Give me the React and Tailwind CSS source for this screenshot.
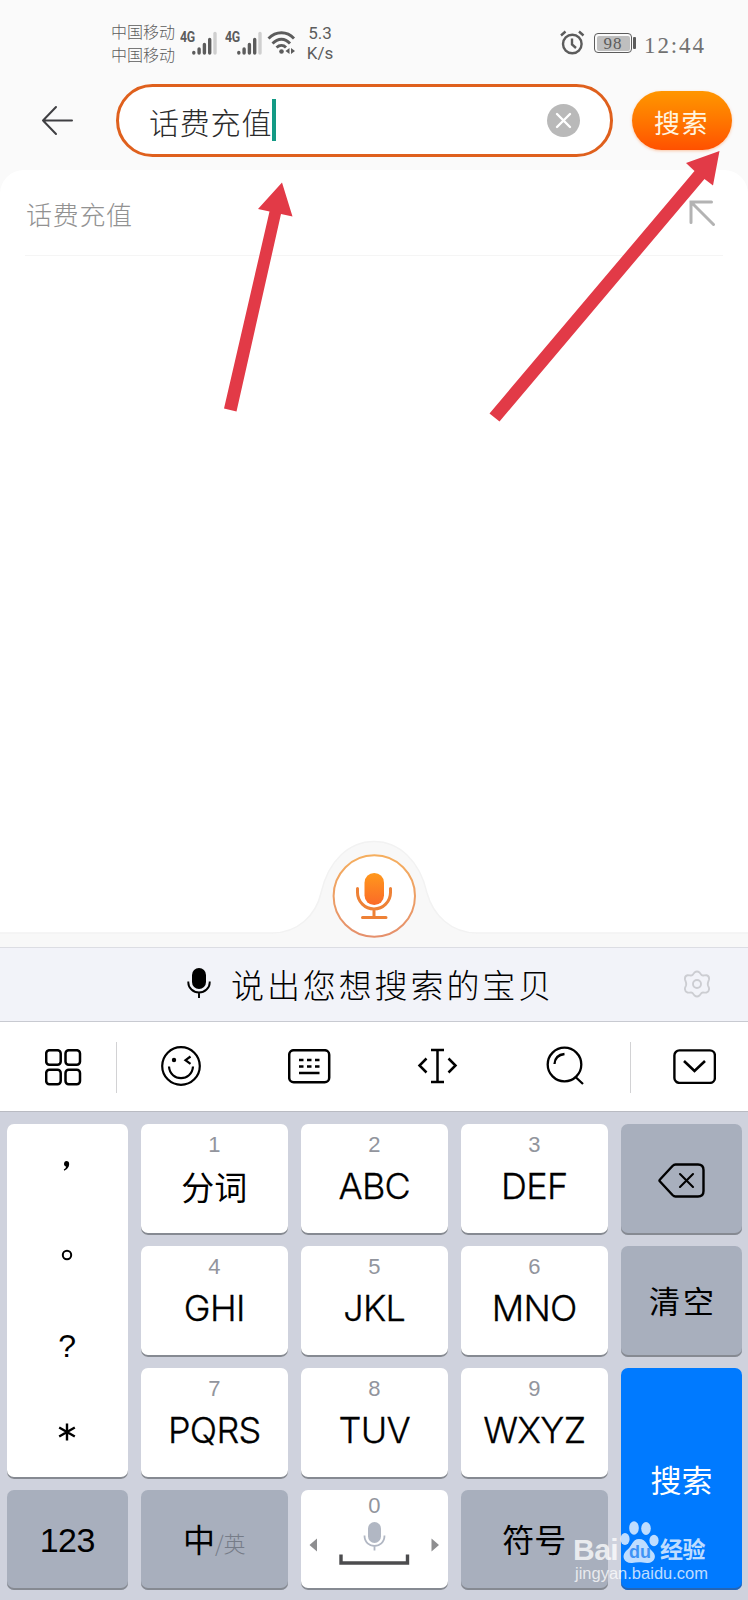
const LETTER_KEYS = [
  { num: "1", label: "分词" },
  { num: "2", label: "ABC" },
  { num: "3", label: "DEF" },
  { num: "4", label: "GHI" },
  { num: "5", label: "JKL" },
  { num: "6", label: "MNO" },
  { num: "7", label: "PQRS" },
  { num: "8", label: "TUV" },
  { num: "9", label: "WXYZ" },
];

// grid slots for the nine letter keys
const SLOTS = [
  "col-start-2 row-start-1",
  "col-start-3 row-start-1",
  "col-start-4 row-start-1",
  "col-start-2 row-start-2",
  "col-start-3 row-start-2",
  "col-start-4 row-start-2",
  "col-start-2 row-start-3",
  "col-start-3 row-start-3",
  "col-start-4 row-start-3",
];

const Signal = ({ className }) => (
  <div className={`flex ${className}`}>
    <span className="w-[12px]">
      <span className="block origin-left scale-x-[0.82] font-['Roboto'] font-bold text-[15px] leading-[12px] -tracking-[0.5px]">
        4G
      </span>
    </span>
    <svg width="26" height="24" viewBox="0 0 26 24" strokeWidth="3.4" strokeLinecap="round" stroke="#5c5c5c">
      <path d="M1.800 21.500v.5M7.100 18v4M12.400 13.500v8.500M17.700 8.500v13.500" />
      <path d="M23 2.500v19.500" stroke="#cfcfcf" />
    </svg>
  </div>
);

const StatusBar = () => (
  <div className="h-[72px] flex items-start text-[#5c5c5c] pl-[111px] shrink-0">
    <div className="w-[66px] mt-[20px] text-[16px] leading-[23px] font-light whitespace-nowrap">
      <p>中国移动</p>
      <p>中国移动</p>
    </div>
    <Signal className="ml-[3px] mt-[31px]" />
    <Signal className="ml-[7px] mt-[31px]" />
    <svg className="ml-[4px] mt-[30px]" width="30" height="26" viewBox="0 0 30 26" fill="none" stroke="#5c5c5c" strokeWidth="2.8">
      <path d="M1.500 8.500C9 0.800 20 0.800 27 8.500" />
      <path d="M5.500 13.500C11 7.800 18 7.800 23 13.500" />
      <path d="M9.500 17.500C12.500 14.800 16.500 14.800 19 17.500" />
      <circle cx="14.500" cy="21.500" r="2.300" fill="#5c5c5c" stroke="none" />
      <path d="M22.500 18v6l-4-3zM24 18v6l4-3z" fill="#5c5c5c" stroke="none" />
    </svg>
    <div className="w-[34px] ml-[6px] mt-[24px] font-['Roboto'] text-[17px] leading-[19.500px] text-center">
      <p>5.3</p>
      <p>K/s</p>
    </div>
    <svg className="ml-[223px] mt-[30px]" width="25" height="26" viewBox="0 0 25 26" fill="none" stroke="#5c5c5c" strokeWidth="2.400">
      <circle cx="12.300" cy="14" r="9.300" />
      <path d="M12 8.500v6l4 3.500M1 5.500L5.500 1.500M23.500 5.500L19 1.500" />
    </svg>
    <div className="ml-[9px] mt-[33px] w-[38px] h-[20px] border-[1.5px] border-[#5c5c5c] rounded-[4px] p-[1.500px]">
      <div className="bg-[#bfbfbf] h-full rounded-[2px] text-center font-['Liberation_Serif'] text-[17px] leading-[15px] tracking-[1px]">
        98
      </div>
    </div>
    <div className="ml-[1px] mt-[37px] w-[3px] h-[12px] bg-[#5c5c5c] rounded-[1px]" />
    <div className="ml-[8px] mt-[34px] font-['Liberation_Serif'] text-[23px] leading-[24px] tracking-[1.900px] text-[#717171]">
      12:44
    </div>
  </div>
);

const SearchHeader = () => (
  <div className="h-[98px] flex items-start pl-[41px] pt-[12px] shrink-0">
    <svg className="mt-[21px]" width="33" height="31" viewBox="0 0 33 31" fill="none" stroke="#3f3f42" strokeWidth="2" strokeLinecap="round" strokeLinejoin="round">
      <path d="M31 15.500H2M15 2L2 15.500L15 29" />
    </svg>
    <div className="ml-[42px] w-[497px] h-[73px] rounded-full border-[3px] border-[#df601d] bg-white flex items-center pl-[30px] pr-[30px]">
      <span className="text-[30px] leading-[36px] tracking-[0.800px] font-light text-[#2b2b2b] mt-[1px] whitespace-nowrap">
        话费充值
      </span>
      <span className="w-[4px] h-[42px] bg-[#139a85] -mt-px" />
      <svg className="ml-auto" width="33" height="33" viewBox="0 0 33 33">
        <circle cx="16.500" cy="16.500" r="16.500" fill="#b9b9b9" />
        <path d="M10 10l13 13M23 10L10 23" stroke="#fff" strokeWidth="2.400" strokeLinecap="round" />
      </svg>
    </div>
    <button className="ml-[19px] mt-[7px] w-[100px] h-[59px] rounded-full bg-linear-to-b from-[#ff9600] to-[#ff5000] shadow-[0_1px_3px_rgba(255,100,0,0.35)] text-[#fff5e0] text-[26px] tracking-[1.500px] pt-[2px] pr-[1px] leading-none">
      搜索
    </button>
  </div>
);

const VoiceBump = () => (
  <svg className="block shrink-0" width="748" height="108" viewBox="0 0 748 108" fill="none">
    <defs>
      <linearGradient id="mic" x1="0" y1="0" x2="0" y2="1">
        <stop offset="0" stopColor="#ff981c" />
        <stop offset="1" stopColor="#fb6a28" />
      </linearGradient>
      <linearGradient id="ring" x1="0" y1="0" x2="0" y2="1">
        <stop offset="0" stopColor="#f5ae5e" />
        <stop offset="1" stopColor="#e5906c" />
      </linearGradient>
    </defs>
    <path
      d="M-2 94H272C298 94 316 76 321 54C328 22 349 2.500 374 2.500C399 2.500 420 22 427 54C433 76 451 94 477 94H750V110H-2Z"
      fill="#f8f8f8"
      stroke="#f2f2f2"
      strokeWidth="1.500"
    />
    <circle cx="374.300" cy="57" r="40.700" fill="#fff" stroke="url(#ring)" strokeWidth="2" />
    <rect x="364.500" y="34" width="19.500" height="32" rx="9.700" fill="url(#mic)" />
    <path d="M357.500 49.500v4a16.500 16.500 0 0 0 33 0v-4M374 71v7M362.500 78.500h23.500" stroke="#ee8136" strokeWidth="3" strokeLinecap="round" />
  </svg>
);

const VoiceBar = () => (
  <div className="h-[75px] bg-[#f2f3f9] border-t border-[#dcdde3] border-b border-b-[#c8cad1] flex items-center pl-[187px] shrink-0">
    <svg className="mt-[-4px]" width="24" height="32" viewBox="0 0 24 32" fill="none" stroke="#000" strokeWidth="1.900">
      <rect x="5" y="1" width="14" height="21" rx="7" fill="#000" stroke="none" />
      <path d="M1.300 14.500v1a10.700 10 0 0 0 21.400 0v-1M12 25.500V31" />
    </svg>
    <span className="ml-[20px] mt-[-1px] text-[33px] leading-[40px] tracking-[2.900px] font-light whitespace-nowrap w-[324px]">
      说出您想搜索的宝贝
    </span>
    <svg className="ml-[129px] mt-[-2px]" width="26" height="28" viewBox="0 0 26 28" fill="none" stroke="#cccdd2" strokeWidth="1.900" strokeLinejoin="round">
      <path d="M10.500 2.500Q13 .5 15.500 2.500L17.500 5Q18.500 5.800 20 5.400L22.500 5.300Q25.500 6 25 9.500L24 12.500Q23.600 14 24 15.500L25 18Q25.500 21.500 22.500 22.500L20 22.600Q18.500 22.200 17.500 23L15.500 25.500Q13 27.500 10.500 25.500L8.500 23Q7.500 22.200 6 22.600L3.500 22.500Q.5 21.500 1 18L2 15.500Q2.400 14 2 12.500L1 9.500Q.5 6 3.500 5.300L6 5.400Q7.500 5.800 8.500 5Z" />
      <circle cx="13" cy="14" r="4" />
    </svg>
  </div>
);

const Toolbar = () => (
  <div className="h-[90px] bg-white border-b border-[#b9bbc2] flex items-start pl-[45px] shrink-0 text-black">
    <svg className="mt-[27px]" width="37" height="37" viewBox="0 0 37 37" fill="none" stroke="currentColor" strokeWidth="2.500">
      <rect x="1.200" y="1.200" width="14.500" height="14.500" rx="3.200" />
      <rect x="20.500" y="1.200" width="14.500" height="14.500" rx="3.200" />
      <rect x="1.200" y="20.700" width="14.500" height="14.500" rx="3.200" />
      <rect x="20.500" y="20.700" width="14.500" height="14.500" rx="3.200" />
    </svg>
    <div className="ml-[34px] mt-[20px] w-px h-[51px] bg-[#d2d2d4]" />
    <svg className="ml-[44px] mt-[24px]" width="40" height="40" viewBox="0 0 40 40" fill="none" stroke="currentColor" strokeWidth="2.200">
      <circle cx="20" cy="20" r="18.800" />
      <circle cx="13" cy="14" r="2.200" fill="currentColor" stroke="none" />
      <path d="M29.500 10.500L24.500 14.200L29.500 17.800M8 20.500C9 36 31 36 32 20.500" />
    </svg>
    <svg className="ml-[87px] mt-[27px]" width="43" height="35" viewBox="0 0 43 35" fill="none" stroke="currentColor" strokeWidth="2.500">
      <rect x="1.200" y="1.200" width="40" height="32" rx="4.500" />
      <path d="M11 11h4.500M19 11h4.500M27 11h4.500M11 17.500h4.500M19 17.500h4.500M27 17.500h4.500M11 24h20.500" />
    </svg>
    <svg className="ml-[86px] mt-[26px]" width="41" height="36" viewBox="0 0 41 36" fill="none" stroke="currentColor" strokeWidth="2.500">
      <path d="M14 2h13M20.500 2v32M14 34h13M9.500 10.500L2.500 17.500L9.500 24.500M31.500 10.500l7 7-7 7" />
    </svg>
    <svg className="ml-[88px] mt-[24px]" width="38" height="40" viewBox="0 0 38 40" fill="none" stroke="currentColor" strokeWidth="2.300">
      <circle cx="18.500" cy="18.500" r="16.800" />
      <path d="M8.500 18Q9 9 18.500 8M29.500 31L37 38" />
    </svg>
    <div className="ml-[46px] mt-[20px] w-px h-[51px] bg-[#d2d2d4]" />
    <svg className="ml-[42px] mt-[27px]" width="43" height="35" viewBox="0 0 43 35" fill="none" stroke="currentColor" strokeWidth="2.400">
      <rect x="1.400" y="1.400" width="40.500" height="32.500" rx="5" />
      <path d="M11 12l10.500 10L32 12" strokeWidth="2.600" />
    </svg>
  </div>
);

const Key = ({ className, children }) => (
  <div className={`rounded-[7px] shadow-[inset_0_-2px_0_#868a92] ${className}`}>{children}</div>
);

const Keyboard = () => (
  <div className="h-[488px] bg-[#cfd2dd] pl-[7px] pt-[12px] grid grid-cols-[120.500px_146.500px_146.500px_146.500px_121px] grid-rows-[111px_111px_111px_100px] gap-x-[13.500px] gap-y-[11px] text-black shrink-0">
    <Key className="bg-white col-start-1 row-start-1 row-span-3 flex flex-col items-center text-[32px] leading-[40px]">
      <svg className="mt-[36px]" width="8" height="12" viewBox="0 0 8 12">
        <path d="M3.500 1C6.200 1 6.800 4 5.600 6.800Q4.200 9.800 1.200 10.800L.8 9.500Q3 8.500 3.200 6.400C.2 6.500.3 1 3.500 1Z" />
      </svg>
      <svg className="mt-[77px]" width="12" height="12" viewBox="0 0 12 12">
        <circle cx="6" cy="6" r="4.200" fill="none" stroke="#000" strokeWidth="2" />
      </svg>
      <span className="mt-[65px] font-['Liberation_Sans']">?</span>
      <svg className="mt-[56px]" width="18" height="20" viewBox="0 0 18 20" stroke="#000" strokeWidth="2.400">
        <path d="M9 1.500v17M1.200 5.500l15.600 9M16.800 5.500l-15.600 9" />
      </svg>
    </Key>

    {LETTER_KEYS.map((key, i) => (
      <Key key={key.num} className={`bg-white flex flex-col items-center ${SLOTS[i]}`}>
        <span className="mt-[9px] text-[22px] leading-[24px] text-[#92959d] font-['Liberation_Sans']">{key.num}</span>
        {i === 0 ? (
          <span className="mt-[9px] text-[33px] leading-[40px]">{key.label}</span>
        ) : (
          <span className="mt-[9px] text-[36px] leading-[40px] -tracking-[0.700px] font-['Inter'] font-light [-webkit-text-stroke:0.3px_black]">
            {key.label}
          </span>
        )}
      </Key>
    ))}

    <Key className="bg-[#a8afbd] col-start-5 row-start-1 flex items-center justify-center">
      <svg className="mt-[2px]" width="47" height="35" viewBox="0 0 47 35" fill="none" stroke="#000" strokeWidth="2.400" strokeLinejoin="round" strokeLinecap="round">
        <path d="M17.500 1.500H40Q45.500 1.500 45.500 7V28Q45.500 33.500 40 33.500H17.500Q16 33.500 14.500 32L2 18.500Q1 17.500 2 16.500L14.500 3Q16 1.500 17.500 1.500Z" />
        <path d="M22 11l13 13M35 11L22 24" strokeWidth="2.100" />
      </svg>
    </Key>
    <Key className="bg-[#a8afbd] col-start-5 row-start-2 flex items-center justify-center text-[31px] tracking-[3px] pl-[3px] pb-[3px]">
      清空
    </Key>
    <Key className="bg-[#007aff] col-start-5 row-start-3 row-span-2 text-white flex justify-center text-[31px] leading-[40px] pt-[91px] shadow-[inset_0_-2px_0_#2465b5]">
      搜索
    </Key>

    <Key className="bg-[#a8afbd] col-start-1 row-start-4 flex items-center justify-center font-['Liberation_Sans'] text-[34px] -tracking-[0.500px]">
      123
    </Key>
    <Key className="bg-[#a8afbd] col-start-2 row-start-4 flex items-baseline justify-center pt-[26px] leading-[44px]">
      <span className="text-[32px]">中</span>
      <span className="text-[22px] text-[#767c88] font-light">/英</span>
    </Key>
    <Key className="bg-white col-start-3 row-start-4 flex flex-col items-center">
      <span className="mt-[4px] text-[22px] leading-[24px] text-[#92959d] font-['Liberation_Sans']">0</span>
      <svg className="mt-[3px]" width="131" height="46" viewBox="0 0 131 46" fill="none">
        <path d="M8 17.500v13L.5 24zM122.500 17.500v13L130 24z" fill="#8e8e90" />
        <rect x="59" y="1" width="13" height="21" rx="6.500" fill="#b1b7c3" />
        <path d="M55.500 14.500c0 14 20 14 20 0M65.500 25.500v4" stroke="#b1b7c3" strokeWidth="1.800" />
        <path d="M32 33.500V42H98.500V33.500" stroke="#4c4c4e" strokeWidth="3.400" />
      </svg>
    </Key>
    <Key className="bg-[#a8afbd] col-start-4 row-start-4 flex items-center justify-center text-[32px] pb-[4px]">
      符号
    </Key>
  </div>
);

// red pointers drawn over the page
const Pointers = () => (
  <svg className="absolute left-0 top-0" width="748" height="440" viewBox="0 0 748 440" fill="#e23a47">
    <path d="M282 182.500L292.500 216.500L281 214L236.500 411.500L224 408.500L269.500 211.500L258 209Z" />
    <path d="M719.500 151L713 185.500L704.500 179L499.500 421.500L489.500 413.500L694.500 171L686 163Z" />
  </svg>
);

const Watermark = () => (
  <div className="absolute left-[573px] top-[1518px] w-[140px] text-white/75">
    <div className="flex items-end h-[46px]">
      <span className="font-['Liberation_Sans'] font-bold text-[30px] leading-[30px] -tracking-[0.500px] w-[47px] -mb-px">Bai</span>
      <div className="relative">
        <svg width="39" height="44" viewBox="0 0 39 44" fill="currentColor">
          <ellipse cx="5" cy="19" rx="4.600" ry="6" />
          <ellipse cx="14" cy="8" rx="4.800" ry="6.800" />
          <ellipse cx="26" cy="8.500" rx="4.800" ry="6.500" />
          <ellipse cx="34" cy="20.500" rx="4.600" ry="5.800" />
          <path d="M19 19C27 19 27 27 32 31C38 36 34 43.500 27 43C21 42 17 42 12 43C4 43.500 1 36 6 31C12 27 12 19 19 19Z" />
        </svg>
        <span className="absolute left-[9px] top-[22px] font-['Liberation_Sans'] font-bold text-[18px] leading-[20px] text-[#3f93f5]">du</span>
      </div>
      <span className="ml-px text-[23px] leading-[28px] font-bold -tracking-[0.500px] mb-[2px]">经验</span>
    </div>
    <p className="ml-[2px] font-['Liberation_Sans'] text-[16.500px] leading-[20px] -mt-px">jingyan.baidu.com</p>
  </div>
);

const App = () => {
  return (
    <div className="relative w-[748px] h-[1600px] overflow-hidden flex flex-col bg-[#fafafa] font-['Noto_Sans_CJK_SC',sans-serif]">
      <StatusBar />
      <SearchHeader />

      <div className="h-[669px] bg-white rounded-t-[24px] px-[25px] shrink-0">
        <div className="h-[86px] border-b border-[#f5f5f5] flex items-center justify-between pl-px pr-[7px]">
          <span className="text-[26px] tracking-[0.700px] font-light text-[#929292] mt-[2px]">话费充值</span>
          <svg className="mt-[1px]" width="27" height="27" viewBox="0 0 27 27" fill="none" stroke="#b3b3b3" strokeWidth="3" strokeLinecap="round">
            <path d="M22.500 2H2V22.500M2 2L24.500 24.500" />
          </svg>
        </div>
      </div>

      <div className="bg-white shrink-0">
        <VoiceBump />
      </div>
      <VoiceBar />
      <Toolbar />
      <Keyboard />

      <Pointers />
      <Watermark />
    </div>
  );
};

export default App;
